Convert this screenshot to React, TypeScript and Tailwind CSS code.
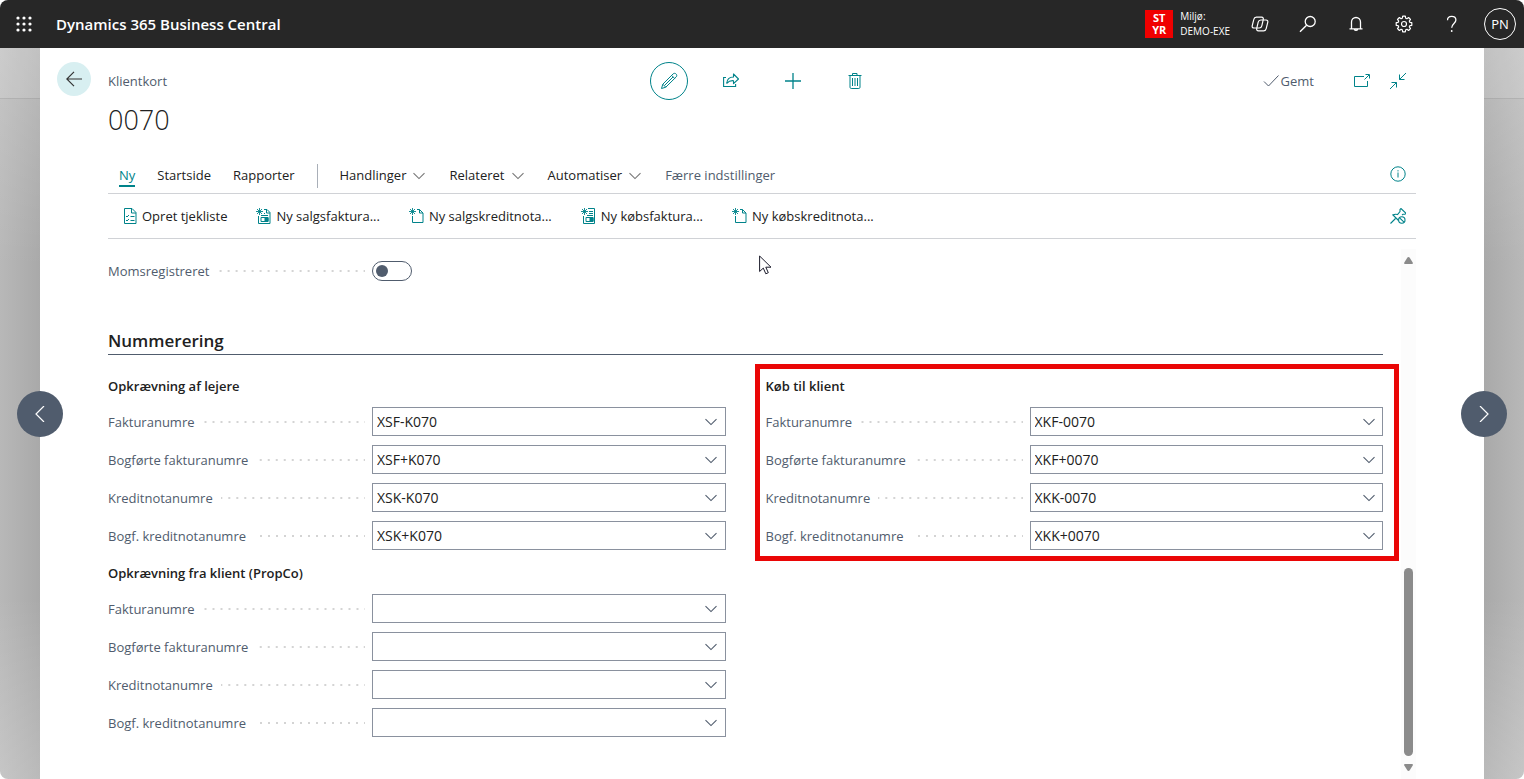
import type { ReactNode } from 'react'

type IconProps = { children: ReactNode; className?: string; size?: number }

function Icon({ children, className = '', size = 16 }: IconProps) {
  return (
    <svg
      aria-hidden="true"
      width={size}
      height={size}
      viewBox={`0 0 ${size} ${size}`}
      fill="none"
      stroke="currentColor"
      strokeWidth="1"
      className={`shrink-0 ${className}`}
    >
      {children}
    </svg>
  )
}

function Chevron({ className = '' }: { className?: string }) {
  return (
    <svg aria-hidden="true" width="12" height="8" viewBox="0 0 12 8" fill="none" stroke="currentColor" className={className}>
      <path d="M.5 1.200 6 6.600l5.500-5.400" strokeWidth="1.100" />
    </svg>
  )
}

const spark = <path d="M3.500 0v7M0 3.500h7M1 1l5 5M6 1 1 6" strokeWidth=".9" />

const icons: Record<string, ReactNode> = {
  checklist: (
    <>
      <path d="M2.500.5h7.500l4 4v11H2.500zM9.500.5v4.500h4.500" />
      <path d="m4 8 1 1 2-2M4 12l1 1 2-2M8.500 8.500h4M8.500 12.500h4" />
    </>
  ),
  salesInvoice: (
    <>
      {spark}
      <path d="M8 1.500h3l3 3v11H2.500V8M10.500 1.500v3.500H14M8 5.500h1M5 7.500h7" />
      <path d="M5 9.500h7v4H5z" />
      <path d="M9 9.500h3v4H9z" fill="currentColor" />
    </>
  ),
  page: (
    <>
      {spark}
      <path d="M8 1.500h2.500l3.500 3.500v9.500H3.500V8M10.500 1.500v3.500H14" />
    </>
  ),
  purchaseInvoice: (
    <>
      {spark}
      <path d="M7 .5h6.500v15h-11V8M8 3.500h4M8 5.500h4M6 7.500h6" />
      <path d="M5 9.500h7v4H5z" />
      <path d="M9 9.500h3v4H9z" fill="currentColor" />
    </>
  ),
}

function HeaderButton({ label, children }: { label: string; children: ReactNode }) {
  return (
    <button type="button" aria-label={label} className="flex h-12 w-12 items-center justify-center">
      {children}
    </button>
  )
}

function TopBar() {
  const dots = [2, 8, 14]
  return (
    <header className="flex h-12 shrink-0 items-center bg-[#272727] text-white">
      <HeaderButton label="Appstarter">
        <svg aria-hidden="true" width="16" height="16" viewBox="0 0 16 16" fill="currentColor">
          {dots.flatMap((y) => dots.map((x) => <circle key={`${x}-${y}`} cx={x} cy={y} r="1.600" />))}
        </svg>
      </HeaderButton>
      <a href="#" className="ml-2 text-[15px] font-semibold">
        Dynamics 365 Business Central
      </a>
      <div className="ml-auto flex items-center">
        <div className="flex h-7 w-7 items-center justify-center bg-[#f00000] text-center text-[11px] leading-3 font-bold">
          ST
          <br />
          YR
        </div>
        <div className="mr-1.5 ml-[7px] text-[10px] leading-[15px]">
          <div>Miljø:</div>
          <div>DEMO-EXE</div>
        </div>
        <HeaderButton label="Copilot">
          <Icon size={18}>
            <g strokeWidth="1.200" strokeLinejoin="round">
              <path d="M5.400 2.200h5.200c1.400 0 2 .9 1.700 2.200l-1.500 6.400c-.3 1.400-1.200 2.200-2.600 2.200H3c-1.400 0-2.100-.9-1.800-2.200l1.600-6.400c.3-1.400 1.200-2.200 2.600-2.200z" />
              <path d="M9.800 5H15c1.400 0 2.100.9 1.800 2.200l-1.600 6.400c-.3 1.400-1.200 2.200-2.600 2.200H7.400c-1.400 0-2-.9-1.700-2.200l1.500-6.400C7.500 5.800 8.400 5 9.800 5z" />
            </g>
          </Icon>
        </HeaderButton>
        <HeaderButton label="Søg">
          <Icon size={18}>
            <circle cx="11.200" cy="6.500" r="5" strokeWidth="1.300" />
            <path d="M7.600 10.200 1 16.700" strokeWidth="1.400" />
          </Icon>
        </HeaderButton>
        <HeaderButton label="Meddelelser">
          <Icon size={18}>
            <path d="M4.500 13.500V7a4.500 4.500 0 0 1 9 0v6.500M2.500 13.800h13M7.300 14.200a1.800 1.800 0 0 0 3.400 0" strokeWidth="1.300" />
          </Icon>
        </HeaderButton>
        <HeaderButton label="Indstillinger">
          <Icon size={18}>
            <circle cx="9" cy="9" r="2.500" strokeWidth="1.200" />
            <path
              strokeWidth="1.200"
              strokeLinejoin="round"
              d="M7.700 1.200h2.600l.4 2 1.200.5 1.700-1.200 1.900 1.900-1.200 1.700.5 1.200 2 .4v2.600l-2 .4-.5 1.200 1.200 1.700-1.900 1.900-1.700-1.200-1.200.5-.4 2H7.700l-.4-2-1.200-.5-1.700 1.200-1.900-1.900 1.200-1.700-.5-1.200-2-.4V7.700l2-.4.500-1.200-1.200-1.700 1.900-1.900 1.700 1.200 1.200-.5z"
            />
          </Icon>
        </HeaderButton>
        <HeaderButton label="Hjælp">
          <Icon size={18}>
            <path d="M4.500 5.200C4.500 2.800 6.200 1.300 8.700 1.300s4.200 1.500 4.200 3.800c0 3.300-4.200 3.600-4.200 7.700" strokeWidth="1.300" />
            <circle cx="8.700" cy="16" r=".9" fill="currentColor" stroke="none" />
          </Icon>
        </HeaderButton>
        <HeaderButton label="Konto PN">
          <span className="flex h-8 w-8 items-center justify-center rounded-full border border-white pt-0.5 text-[13px]">PN</span>
        </HeaderButton>
      </div>
    </header>
  )
}

function PageActions() {
  return (
    <div className="flex gap-6 text-[#00838a]">
      <button type="button" aria-label="Rediger" className="flex h-[38px] w-[38px] items-center justify-center rounded-full border border-[#00838a]">
        <Icon size={18}>
          <path d="m1.500 16.500 1.300-4.300L13 2c1-1 2.300-.8 3.100 0s1 2 0 3L5.800 15.200zM2.800 12.200l3 3M11.600 3.400l3 3M4.500 13.500l8.600-8.600" strokeLinejoin="round" />
        </Icon>
      </button>
      <button type="button" aria-label="Del" className="flex h-[38px] w-[38px] items-center justify-center">
        <Icon>
          <path d="M3 4.500H.6v9h12V11" strokeWidth="1.100" />
          <path d="M10.500 1v3C6.500 4 4 6.200 3.800 10.300 5.500 8.300 7.500 7.500 10.500 7.700v3L15.500 6z" strokeLinejoin="round" strokeWidth="1.100" />
        </Icon>
      </button>
      <button type="button" aria-label="Ny" className="flex h-[38px] w-[38px] items-center justify-center">
        <Icon>
          <path d="M8 0v16M0 8h16" strokeWidth="1.300" />
        </Icon>
      </button>
      <button type="button" aria-label="Slet" className="flex h-[38px] w-[38px] items-center justify-center">
        <Icon>
          <path d="M1.500 2.500h13M5.500 2.500v-2h4.500v2M3 2.500v11.800c0 .7.500 1.200 1.200 1.200h7.600c.7 0 1.200-.5 1.200-1.200V2.500" />
          <path d="M5.500 5v8M8 5v8M10.500 5v8" />
        </Icon>
      </button>
    </div>
  )
}

function PageHeader() {
  return (
    <div className="grid grid-cols-[1fr_auto_1fr] items-center">
      <span className="pt-0.5 text-[13px] text-[#505c6d]">Klientkort</span>
      <PageActions />
      <div className="flex items-center justify-end pr-[10px]">
        <span className="flex items-center gap-0.5 text-[13px] text-[#505c6d]">
          <Icon>
            <path d="m1 8.500 4.500 4.500L15.500 2.500" />
          </Icon>
          <span className="pt-0.5">Gemt</span>
        </span>
        <button type="button" aria-label="Åbn i nyt vindue" className="ml-10 text-[#00838a]">
          <Icon>
            <path d="M10 3.500H.5v10h13V8" />
            <path d="M10.500 6.500 15 2M11.500 1.500h4v4" />
          </Icon>
        </button>
        <button type="button" aria-label="Skjul" className="ml-5 text-[#00838a]">
          <Icon>
            <path d="M16 0 9.500 6.500M9.500 1.500v5h5M0 16l6.500-6.500M1.500 9.500h5v5" />
          </Icon>
        </button>
      </div>
    </div>
  )
}

const menus = ['Handlinger', 'Relateret', 'Automatiser']

function TabBar() {
  return (
    <nav className="flex h-[52px] items-center border-b border-[#d0d2d6] pt-3 pr-[10px] pl-[11px] text-[13px] text-[#212121]">
      <div className="flex items-center gap-[22px] pt-1">
        <a href="#" className="relative text-[#00838a] after:absolute after:inset-x-0 after:top-full after:h-0.5 after:bg-[#00838a]">
          Ny
        </a>
        <a href="#">Startside</a>
        <a href="#">Rapporter</a>
        <span className="h-6 w-px bg-[#a9afb8]" />
        <div className="flex items-center gap-6">
          {menus.map((menu) => (
            <button key={menu} type="button" className="flex items-center gap-[7px]">
              {menu}
              <Chevron className="text-[#767676]" />
            </button>
          ))}
          <button type="button" className="text-[#505c6d]">
            Færre indstillinger
          </button>
        </div>
      </div>
      <button type="button" aria-label="Detaljer" className="ml-auto text-[#00838a]">
        <Icon>
          <circle cx="8" cy="8" r="7.200" />
          <path d="M8 6.500v5M8 4.200v1.200" />
        </Icon>
      </button>
    </nav>
  )
}

const commands = [
  { icon: 'checklist', label: 'Opret tjekliste' },
  { icon: 'salesInvoice', label: 'Ny salgsfaktura...' },
  { icon: 'page', label: 'Ny salgskreditnota...' },
  { icon: 'purchaseInvoice', label: 'Ny købsfaktura...' },
  { icon: 'page', label: 'Ny købskreditnota...' },
]

function CommandBar() {
  return (
    <div className="flex h-[45px] items-center border-b border-[#d0d2d6] pr-[10px] pl-[14px] text-[13px] text-[#212121]">
      <div className="flex items-center gap-[29px]">
        {commands.map((command) => (
          <button key={command.label} type="button" className="flex items-center gap-1">
            <Icon className="text-[#00838a]">{icons[command.icon]}</Icon>
            <span className="pt-0.5">{command.label}</span>
          </button>
        ))}
      </div>
      <button type="button" aria-label="Frigør" className="ml-auto text-[#00838a]">
        <Icon>
          <path d="m.5 15.500 5-5M2.500 6.500l6 6M3 7c1.500-1 3-1 4.500-.5L10 3.500V1.500l1-1 5 4.800-1 1h-2L12 7" strokeWidth="1.100" />
          <circle cx="11.800" cy="12" r="3.200" strokeWidth="1.100" />
          <path d="m9.600 9.800 4.400 4.400" strokeWidth="1.100" />
        </Icon>
      </button>
    </div>
  )
}

const dotted =
  'ml-2 mr-[7px] h-0.5 flex-1 bg-[linear-gradient(to_left,#d4d4d4_1px,transparent_1px,transparent_7px,#d4d4d4_7px)] bg-[length:8px_2px] bg-right'

function NumberField({ id, label, value }: { id: string; label: string; value: string }) {
  return (
    <div className="flex h-[29px] items-center">
      <div className="flex w-[264px] shrink-0 items-center">
        <label htmlFor={id} className="pt-0.5 text-[13px] text-[#505c6d]">
          {label}
        </label>
        <span className={dotted} />
      </div>
      <div className="flex h-full min-w-0 flex-1 items-center border border-[#8a919e] bg-white">
        <input id={id} type="text" defaultValue={value} className="h-full min-w-0 flex-1 pl-1 text-sm text-[#212121] outline-none" />
        <button type="button" aria-label={`Vælg ${label}`} className="flex h-full w-[27px] items-center justify-center text-[#505c6d]">
          <Chevron />
        </button>
      </div>
    </div>
  )
}

const fieldLabels = ['Fakturanumre', 'Bogførte fakturanumre', 'Kreditnotanumre', 'Bogf. kreditnotanumre']

function FieldGroup({ id, title, values }: { id: string; title: string; values: string[] }) {
  return (
    <section>
      <h3 className="mb-[9px] text-[13px] leading-6 font-semibold text-[#212121]">{title}</h3>
      <div className="flex flex-col gap-[9px]">
        {fieldLabels.map((label, index) => (
          <NumberField key={label} id={`${id}-${index}`} label={label} value={values[index]} />
        ))}
      </div>
    </section>
  )
}

function CardBody() {
  return (
    <div className="relative flex flex-1">
      <div className="mr-[18px] flex-1 pt-[22px] pb-10">
        <div className="flex h-5 items-center">
          <div className="flex w-[264px] items-center">
            <label htmlFor="vat" className="pt-0.5 text-[13px] text-[#505c6d]">
              Momsregistreret
            </label>
            <span className={dotted} />
          </div>
          <input
            id="vat"
            type="checkbox"
            role="switch"
            className="flex h-5 w-10 appearance-none items-center rounded-full border border-[#505c6d] px-[3px] before:h-3 before:w-3 before:rounded-full before:bg-[#505c6d] checked:justify-end"
          />
        </div>
        <h2 className="mt-[47px] border-b border-[#505c6d] text-[17px] leading-[26px] font-semibold text-[#212121]">Nummerering</h2>
        <div className="mt-[19px] grid grid-cols-2 gap-x-10">
          <div className="flex flex-col gap-[11px]">
            <FieldGroup id="tenants" title="Opkrævning af lejere" values={['XSF-K070', 'XSF+K070', 'XSK-K070', 'XSK+K070']} />
            <FieldGroup id="propco" title="Opkrævning fra klient (PropCo)" values={['', '', '', '']} />
          </div>
          <div className="relative self-start">
            <FieldGroup id="purchase" title="Køb til klient" values={['XKF-0070', 'XKF+0070', 'XKK-0070', 'XKK+0070']} />
            <div className="pointer-events-none absolute -top-[10px] -right-4 -bottom-[11px] -left-[11px] border-5 border-[#ea0606]" />
          </div>
        </div>
      </div>
      <div aria-hidden="true" className="mt-[10px] flex w-[15px] flex-col items-center bg-[#fcfcfc] pt-2 pb-2 text-[#8b8b8b]">
        <svg width="9" height="8" viewBox="0 0 9 8" fill="currentColor">
          <path d="M4.500 0c.6 0 1 .4 1.400 1L8.700 5.500c.5.900.1 1.500-.7 1.500H1C.2 7-.2 6.400.3 5.500L3.100 1c.4-.6.8-1 1.400-1z" />
        </svg>
        <div className="mt-auto mb-2 h-[188px] w-[9px] rounded-full bg-[#8b8b8b]" />
        <svg width="9" height="7" viewBox="0 0 9 7" fill="currentColor">
          <path d="M4.500 7c-.6 0-1-.4-1.400-1L.3 1.500C-.2.6.2 0 1 0h7c.8 0 1.200.6.7 1.500L5.900 6c-.4.6-.8 1-1.400 1z" />
        </svg>
      </div>
      <svg aria-hidden="true" className="absolute top-4 left-[651px]" width="13" height="20" viewBox="0 0 13 20">
        <path d="M.6 1v15.500l3.700-3.400 2.500 5.700 2.500-1.100-2.500-5.500H12z" fill="#fff" stroke="#1b1b2b" strokeWidth="1" />
      </svg>
    </div>
  )
}

function Backdrop({ side }: { side: 'left' | 'right' }) {
  const shade =
    side === 'left'
      ? 'bg-[linear-gradient(to_bottom,#ffffff33,transparent_30%,transparent_75%,#ffffff33),linear-gradient(to_right,#b8b8b8,#a9a9a9)]'
      : 'bg-[linear-gradient(to_bottom,#ffffff33,transparent_30%,transparent_75%,#ffffff33),linear-gradient(to_left,#b8b8b8,#a9a9a9)]'
  return (
    <div className={`relative w-10 shrink-0 ${shade}`}>
      <div className="h-[51px] border-b border-black/10 bg-white/10" />
      <button
        type="button"
        aria-label={side === 'left' ? 'Forrige' : 'Næste'}
        className={`absolute top-1/2 z-10 flex h-[46px] w-[46px] -translate-y-1/2 items-center justify-center rounded-full bg-[#505c6d] text-white ${
          side === 'left' ? '-right-[23px]' : '-left-[23px]'
        }`}
      >
        <Icon>
          <path d={side === 'left' ? 'M12 0 4 8l8 8' : 'M4 0l8 8-8 8'} strokeWidth="1.200" />
        </Icon>
      </button>
    </div>
  )
}

export default function App() {
  return (
    <div className="flex min-h-screen flex-col overflow-hidden rounded-lg font-['Open_Sans','Noto_Sans',sans-serif]">
      <TopBar />
      <div className="flex flex-1">
        <Backdrop side="left" />
        <main className="flex min-w-0 flex-1 bg-white pt-[14px] pr-[68px] pl-[17px]">
          <button type="button" aria-label="Tilbage" className="mr-[17px] flex h-[34px] w-[34px] shrink-0 items-center justify-center rounded-full bg-[#d8eff1] text-[#333]">
            <Icon>
              <path d="M16 8H.8M8 .8.8 8 8 15.200" strokeWidth="1.200" />
            </Icon>
          </button>
          <div className="flex min-w-0 flex-1 flex-col">
            <PageHeader />
            <h1 className="mb-0.5 text-[27px] leading-10 font-light text-[#212121]">0070</h1>
            <TabBar />
            <CommandBar />
            <CardBody />
          </div>
        </main>
        <Backdrop side="right" />
      </div>
    </div>
  )
}
